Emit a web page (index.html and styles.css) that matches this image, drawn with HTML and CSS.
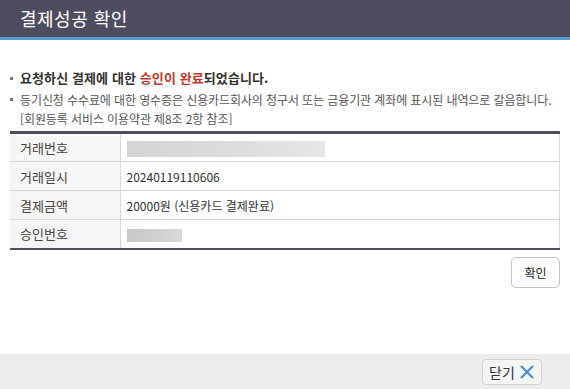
FILE: index.html
```html
<!DOCTYPE html>
<html lang="ko">
<head>
<meta charset="utf-8">
<link rel="stylesheet" href="styles.css">
</head>
<body>
<div class="page">
  <header class="head">
    <h1 class="title">결제성공 확인</h1>
  </header>
  <main class="body">
    <ul class="notes">
      <li class="note strong">요청하신 결제에 대한 <span class="red">승인이 완료</span>되었습니다.</li>
      <li class="note">등기신청 수수료에 대한 영수증은 신용카드회사의 청구서 또는 금융기관 계좌에 표시된 내역으로 갈음합니다.<br>[회원등록 서비스 이용약관 제8조 2항 참조]</li>
    </ul>
    <table class="info">
      <tr><th>거래번호</th><td><span class="blur blur-long"></span></td></tr>
      <tr><th>거래일시</th><td>20240119110606</td></tr>
      <tr><th>결제금액</th><td>20000원 (신용카드 결제완료)</td></tr>
      <tr><th>승인번호</th><td><span class="blur blur-short"></span></td></tr>
    </table>
    <div class="actions">
      <button class="btn">확인</button>
    </div>
  </main>
  <footer class="foot">
    <button class="close">닫기
      <svg class="x" width="16" height="16" viewBox="0 0 16 16"><path d="M2 2 L14 14 M14 2 L2 14" stroke="#4a90cf" stroke-width="2.2" fill="none"/></svg>
    </button>
  </footer>
</div>
</body>
</html>
```
FILE: styles.css
```css
* { box-sizing: border-box; }
html, body { margin: 0; padding: 0; }
body {
  width: 570px; height: 389px; overflow: hidden;
  font-family: "Noto Sans CJK KR", "Noto Sans", sans-serif;
  background: #fff; color: #333;
}
.page { display: flex; flex-direction: column; height: 389px; }
.head {
  height: 40px; background: #4e4d5f;
  border-bottom: 3px solid #5a9bd3;
  padding-left: 20px; display: flex; align-items: center;
}
.title { margin: 0; font-size: 18px; font-weight: 400; color: #fff; line-height: 1; padding-bottom: 1px; letter-spacing: 0.5px; }
.body { flex: 1; padding: 28px 10px 0 10px; }
.notes { list-style: none; margin: 0; padding: 0; }
.note {
  position: relative; padding-left: 10px;
  font-size: 12px; line-height: 19px; color: #555; letter-spacing: -0.1px;
}
.note::before {
  content: ""; position: absolute; left: 0; top: 8px;
  width: 3px; height: 3px; background: #777;
}
.note.strong { font-weight: 700; color: #333; margin-bottom: 3px; font-size: 13px; letter-spacing: 0.1px; }
.note.strong::before { top: 9px; }
.red { color: #c0392b; }
.info {
  width: 550px; margin-top: 3px; border-collapse: collapse;
  border-top: 3px solid #4e4d5f; border-bottom: 2px solid #4e4d5f;
  border-right: 1px solid #d8d8d8;
  font-size: 12px;
}
.info th, .info td {
  height: 29px; border-bottom: 1px solid #d8d8d8; padding: 0 8px;
  text-align: left; vertical-align: middle;
}
.info tr:last-child th, .info tr:last-child td { border-bottom: none; }
.info th {
  width: 110px; background: #f6f6f6; font-weight: 400; color: #444;
  border-right: 1px solid #d8d8d8; font-size: 13px; padding-left: 10px;
}
.info td { color: #333; letter-spacing: 0; padding-left: 6px; }
.blur { display: inline-block; height: 16px; vertical-align: middle; }
.blur-long { width: 198px; background: linear-gradient(90deg, #d4d4d4, #dcdcdc 50%, #e6e6e6); }
.blur-short { width: 55px; height: 13px; background: linear-gradient(90deg, #c8c8c8, #d8d8d8); }
.actions { display: flex; justify-content: flex-end; margin-top: 7px; }
.btn {
  width: 49px; height: 31px; background: #fff; border: 1px solid #c4c4c4;
  border-radius: 5px; font-family: inherit; font-size: 12px; color: #222; padding: 0;
}
.foot {
  height: 35px; background: #ececec; display: flex; justify-content: flex-end;
  align-items: flex-start; padding: 5px 28px 0 0;
}
.close {
  width: 60px; height: 26px; background: #f4f4f4; border: 1px solid #d0d0d0;
  border-radius: 4px; display: flex; align-items: center; justify-content: center; gap: 4px;
  font-family: inherit; font-size: 14px; color: #333; padding: 0;
}
.x { display: block; }
```
